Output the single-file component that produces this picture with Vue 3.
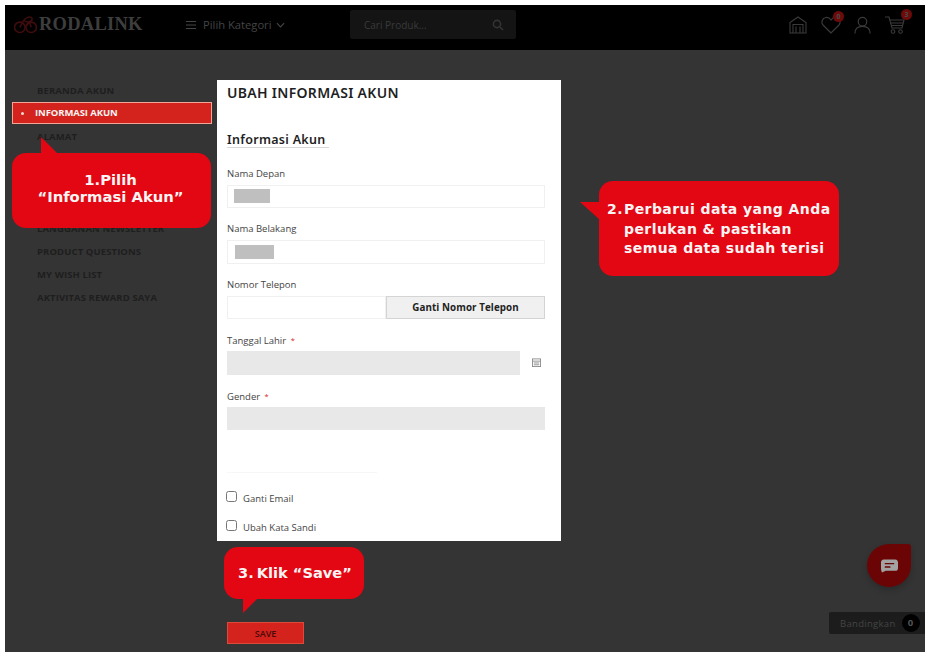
<script setup>
const menu = [
  { t: 'BERANDA AKUN' },
  { t: 'INFORMASI AKUN', active: true },
  { t: 'ALAMAT' },
  { t: '' },
  { t: '' },
  { t: '' },
  { t: 'LANGGANAN NEWSLETTER' },
  { t: 'PRODUCT QUESTIONS' },
  { t: 'MY WISH LIST' },
  { t: 'AKTIVITAS REWARD SAYA' }
]
</script>

<template>
  <div class="shell">
    <header class="topbar">
      <div class="brand">
        <svg class="bike" viewBox="0 0 24 20" fill="none" stroke="#400c0d" stroke-width="1.6">
          <circle cx="6" cy="13" r="5.5" />
          <circle cx="18" cy="13" r="5.5" />
          <path d="M6 13 C9 6 12 2 16 2 C20 2 20 6 16 7 C13 8 11 7 10 5 M16 7 L18 13 M12 13 L16 7" />
        </svg>
        <span class="brand-name">RODALINK</span>
      </div>
      <div class="cat">
        <svg class="burger" viewBox="0 0 12 10" stroke="#444" stroke-width="1.3"><path d="M0 1.2H11M0 5H11M0 8.8H11" /></svg>
        <span>Pilih Kategori</span>
        <svg class="chev" viewBox="0 0 10 6" fill="none" stroke="#444" stroke-width="1.3"><path d="M1 1L5 5L9 1" /></svg>
      </div>
      <div class="search">
        <span>Cari Produk...</span>
        <svg class="mag" viewBox="0 0 12 12" fill="none" stroke="#333" stroke-width="1.6"><circle cx="5" cy="5" r="3.6" /><path d="M8 8L11 11" /></svg>
      </div>
      <div class="tools">
        <svg class="tool t-home" viewBox="0 0 18 18" fill="none" stroke="#3a3a3a" stroke-width="1.1">
          <path d="M1 6.5L9 1L17 6.5V17H1Z" /><path d="M4 17V8.5H14V17M7 17V10.5M11 17V10.5M4 8.5H14" />
        </svg>
        <div class="tool-wrap t-heart">
          <svg viewBox="0 0 20 18" fill="none" stroke="#3a3a3a" stroke-width="1.2">
            <path d="M10 17L2 9C0 6.5 1 2 5 1.5C7.5 1.2 9 2.5 10 4C11 2.5 12.5 1.2 15 1.5C19 2 20 6.5 18 9Z" />
          </svg>
          <b class="badge">0</b>
        </div>
        <svg class="tool t-user" viewBox="0 0 18 18" fill="none" stroke="#3a3a3a" stroke-width="1.3">
          <circle cx="9" cy="5.5" r="4.5" /><path d="M1 18C1 13 4 10.5 9 10.5C14 10.5 17 13 17 18" />
        </svg>
        <div class="tool-wrap t-cart">
          <svg viewBox="0 0 20 18" fill="none" stroke="#3a3a3a" stroke-width="1.1">
            <path d="M0 1H4L7 12H17L19 4H5" /><path d="M5 7H18M6 9.5H17" /><circle cx="8" cy="15.5" r="1.8" /><circle cx="15.5" cy="15.5" r="1.8" />
          </svg>
          <b class="badge">3</b>
        </div>
      </div>
    </header>

    <main class="page">
      <nav class="side">
        <div v-for="(m, i) in menu" :key="i" class="side-row" :class="{ active: m.active }">{{ m.t }}</div>
      </nav>
      <section class="content">
        <div class="panel">
          <h1>UBAH INFORMASI AKUN</h1>
          <h2>Informasi Akun</h2>
          <div class="fields">
            <div class="field">
              <label>Nama Depan</label>
              <div class="input"><i class="mask m1"></i></div>
            </div>
            <div class="field">
              <label>Nama Belakang</label>
              <div class="input"><i class="mask m2"></i></div>
            </div>
            <div class="field">
              <label>Nomor Telepon</label>
              <div class="phone">
                <div class="input grow"></div>
                <button class="change">Ganti Nomor Telepon</button>
              </div>
            </div>
            <div class="field">
              <label>Tanggal Lahir <em>*</em></label>
              <div class="date">
                <div class="input gray grow"></div>
                <svg class="cal" viewBox="0 0 10 10" fill="none" stroke="#8a8a8a" stroke-width="1">
                  <rect x="0.5" y="1" width="9" height="8.5" /><path d="M0.5 3.5H9.5M2 5.5H8M2 7.5H8" />
                </svg>
              </div>
            </div>
            <div class="field">
              <label>Gender <em>*</em></label>
              <div class="input gray"></div>
            </div>
          </div>
          <div class="faint"></div>
          <label class="check c1"><input type="checkbox" /><span>Ganti Email</span></label>
          <label class="check c2"><input type="checkbox" /><span>Ubah Kata Sandi</span></label>
        </div>
        <button class="save">SAVE</button>
      </section>
    </main>

    <div class="chat">
      <svg viewBox="0 0 18 14" fill="#a3a3a3">
        <path d="M3 0H15C17 0 18 1.5 18 3V9C18 11 17 12 15 12H5L1 14C0.5 12 0 11 0 9V3C0 1.5 1 0 3 0Z" />
        <path d="M4 4.5H14M4 8H10" stroke="#6a0505" stroke-width="1.5" />
      </svg>
    </div>
    <div class="compare"><span>Bandingkan</span><b>0</b></div>

    <div class="call call1">1.Pilih<br />“Informasi Akun”</div>
    <div class="call call2">
      <span class="num">2.</span>
      <span>Perbarui data yang Anda<br />perlukan &amp; pastikan<br />semua data sudah terisi</span>
    </div>
    <div class="call call3"><span class="num3">3.</span>Klik “Save”</div>
  </div>
</template>

<style>
html, body { margin: 0; background: #fff; }
</style>

<style scoped>
.shell {
  position: relative;
  width: 920px;
  height: 647px;
  margin: 5px 0 0 5px;
  background: #343434;
  overflow: hidden;
  font-family: "Open Sans", "Noto Sans", sans-serif;
}
.topbar {
  height: 45px;
  box-sizing: border-box;
  padding-bottom: 6px;
  background: #000;
  display: flex;
  align-items: center;
  color: #444;
}
.brand { display: flex; align-items: center; width: 181px; padding-left: 9px; box-sizing: border-box; }
.bike { width: 23px; height: 19px; flex: none; }
.brand-name {
  font: 700 18.5px "Liberation Serif", serif;
  color: #3e3e3e;
  margin-left: 2px;
  letter-spacing: 0.25px;
}
.cat { display: flex; align-items: center; width: 164px; font-size: 11.2px; color: #444; }
.burger { width: 11px; height: 10px; margin-right: 6px; }
.chev { width: 9px; height: 6px; margin-left: 4px; }
.search {
  width: 166px;
  height: 29px;
  background: #141414;
  border-radius: 2px;
  display: flex;
  align-items: center;
  justify-content: space-between;
  padding: 0 12px 0 14px;
  box-sizing: border-box;
  font-size: 10px;
  color: #3a3a3a;
}
.mag { width: 12px; height: 12px; }
.tools { display: flex; align-items: center; margin-left: auto; padding-right: 20px; }
.tool { display: block; }
.t-home { width: 18px; height: 18px; margin-right: 14px; }
.tool-wrap { position: relative; }
.tool-wrap svg { display: block; }
.t-heart { width: 20px; height: 18px; margin-right: 13px; }
.t-user { width: 17px; height: 18px; margin-right: 14px; }
.t-cart { width: 20px; height: 18px; }
.badge {
  position: absolute;
  width: 11px;
  height: 11px;
  border-radius: 50%;
  background: #6d0a0a;
  color: #4a4a4a;
  font-size: 7px;
  line-height: 11px;
  text-align: center;
}
.t-heart .badge { left: 12px; top: -5px; }
.t-cart .badge { left: 16px; top: -7px; }

.page { display: flex; }
.side { width: 205px; margin-left: 7px; padding-top: 29px; flex: none; }
.side-row {
  height: 23px;
  line-height: 23px;
  padding-left: 25px;
  font-size: 9.5px;
  font-weight: 700;
  letter-spacing: 0.1px;
  color: #1e1e1e;
  white-space: nowrap;
}
.side-row.active {
  box-sizing: border-box;
  position: relative;
  height: 22px;
  line-height: 20px;
  margin-bottom: 1px;
  padding-left: 22px;
  width: 200px;
  background: #d3231c;
  border: 1px solid #f2a596;
  color: #f4f4f4;
  letter-spacing: -0.1px;
}
.side-row.active::before {
  content: "";
  position: absolute;
  left: 8px;
  top: 9px;
  width: 3px;
  height: 3px;
  border-radius: 50%;
  background: #f4d8d4;
}
.panel {
  position: relative;
  width: 344px;
  height: 461px;
  margin-top: 30px;
  background: #fff;
  box-sizing: border-box;
  padding-left: 10px;
  color: #333;
}
h1 {
  margin: 0;
  padding-top: 4px;
  font: 600 14px/17px "Noto Sans", sans-serif;
  letter-spacing: 0.3px;
  color: #1f1f1f;
}
h2 {
  display: inline-block;
  margin: 31px 0 0;
  padding: 0 3px 0 0;
  border-bottom: 1px solid #d8d8d8;
  font: 600 12.5px/15px "Noto Sans", sans-serif;
  letter-spacing: 0.3px;
  color: #1f1f1f;
}
.fields { margin-top: 13.5px; }
.field { height: 55.5px; }
.field label {
  display: block;
  height: 22px;
  line-height: 22px;
  font-size: 9.5px;
  color: #444;
}
em { color: #d22; font-style: normal; font-size: 7.5px; margin-left: 2px; vertical-align: 1px; }
.input {
  box-sizing: border-box;
  width: 318px;
  height: 23.5px;
  border: 1px solid #f0f0f0;
  background: #fff;
  display: flex;
  align-items: center;
}
.grow { flex: 1; width: auto; }
.gray { background: #e8e8e8; border-color: #e8e8e8; }
.mask { display: block; height: 14px; background: #bfbfbf; }
.m1 { width: 36px; margin-left: 6px; }
.m2 { width: 39px; margin-left: 7px; }
.phone { display: flex; width: 318px; }
.change {
  width: 159px;
  height: 23.5px;
  box-sizing: border-box;
  padding: 0;
  border: 1px solid #d4d4d4;
  border-radius: 0;
  background: #f0f0f0;
  font: 700 9.8px "Open Sans", sans-serif;
  letter-spacing: 0.08px;
  color: #222;
}
.date { display: flex; align-items: center; width: 318px; }
.date .grow { flex: none; width: 293px; }
.cal { width: 9px; height: 9px; margin-left: 12px; }
.faint {
  width: 150px;
  height: 32px;
  border-bottom: 1px solid #f7f7f7;
}
.check {
  position: absolute;
  left: 9px;
  display: flex;
  align-items: center;
  font-size: 9.5px;
  color: #444;
}
.c1 { top: 411px; }
.c2 { top: 440px; }
.check input { width: 11px; height: 11px; margin: 0 6px 4px 0; }
.save {
  display: block;
  width: 77px;
  height: 22px;
  margin: 81px 0 0 10px;
  padding: 0;
  box-sizing: border-box;
  background: #d3231c;
  border: 1px solid #dc4a3c;
  border-radius: 0;
  font: 600 9px "Open Sans", sans-serif;
  color: #4a0a0a;
}
.chat {
  position: absolute;
  left: 862px;
  top: 539px;
  width: 44px;
  height: 43px;
  background: #6b0505;
  border-radius: 50% 3px 50% 50%;
  display: flex;
  align-items: center;
  justify-content: center;
  box-shadow: 0 3px 6px rgba(0, 0, 0, 0.2);
}
.chat svg { width: 17px; height: 14px; }
.compare {
  position: absolute;
  right: 0;
  top: 607px;
  width: 96px;
  height: 22px;
  background: #1c1c1c;
  border-radius: 2px 0 0 2px;
  display: flex;
  align-items: center;
  box-sizing: border-box;
  padding-left: 11px;
  font-size: 9.5px;
  color: #444;
  letter-spacing: 0.3px;
}
.compare b {
  width: 18px;
  height: 18px;
  line-height: 18px;
  margin-left: 6px;
  border-radius: 50%;
  background: #000;
  text-align: center;
  color: #555;
}
.call {
  position: absolute;
  background: #e30613;
  color: #fbf4f4;
  font-family: "DejaVu Sans", sans-serif;
  font-weight: 700;
}
.call::before { content: ""; position: absolute; background: #e30613; }
.call1 {
  left: 7px;
  top: 148px;
  width: 199px;
  height: 75px;
  box-sizing: border-box;
  padding: 18px 2px 0 0;
  border-radius: 14px;
  font-size: 14.8px;
  line-height: 17px;
  text-align: center;
}
.call1::before {
  left: 29px;
  top: -16px;
  width: 17px;
  height: 17px;
  clip-path: polygon(0 0, 100% 100%, 0 100%);
}
.call2 {
  left: 594px;
  top: 176px;
  width: 240px;
  height: 95px;
  box-sizing: border-box;
  padding: 19px 0 0 8px;
  border-radius: 14px;
  display: flex;
  font-size: 14px;
  line-height: 19.5px;
  letter-spacing: 0.42px;
}
.call2::before {
  left: -19px;
  top: 21px;
  width: 20px;
  height: 18px;
  clip-path: polygon(0 0, 100% 0, 100% 100%);
}
.num { width: 17px; flex: none; }
.call3 {
  left: 219px;
  top: 542px;
  width: 140px;
  height: 52px;
  box-sizing: border-box;
  padding: 17px 0 0 14px;
  border-radius: 14px;
  font-size: 14.6px;
  line-height: 17px;
  white-space: nowrap;
}
.call3::before {
  left: 19px;
  bottom: -14px;
  width: 15px;
  height: 15px;
  clip-path: polygon(0 0, 100% 0, 0 100%);
}
.num3 { margin-right: 3px; }
</style>
